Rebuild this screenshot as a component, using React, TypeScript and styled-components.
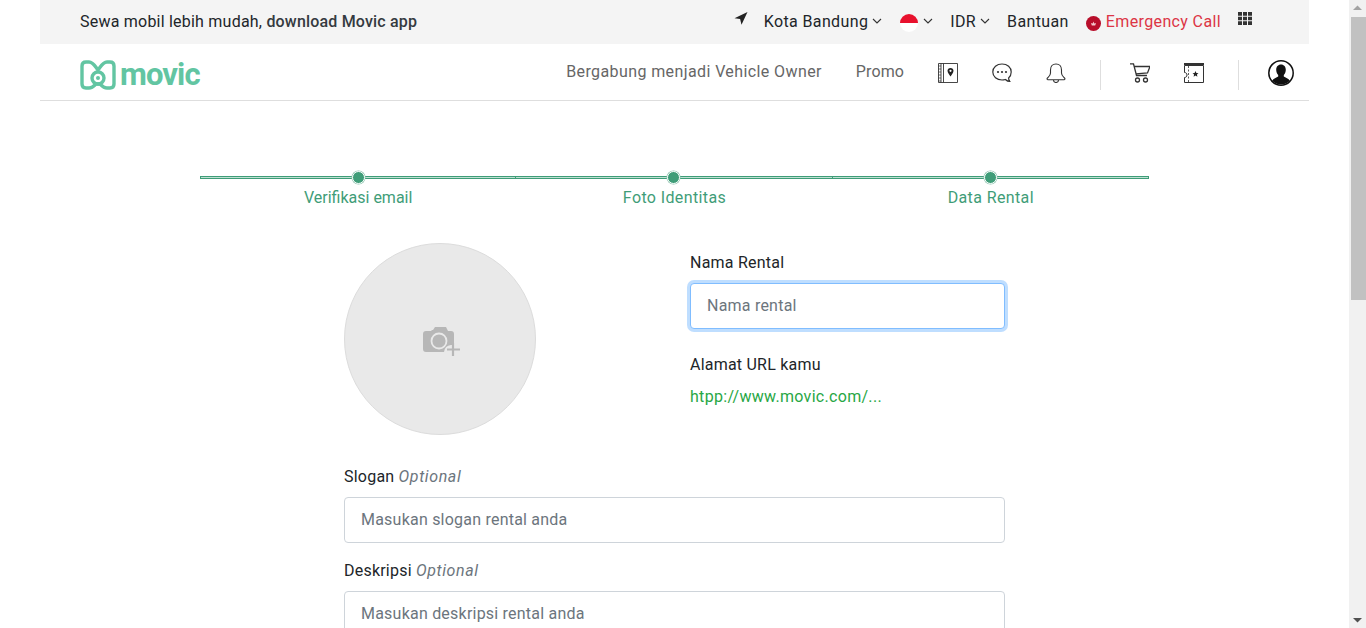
import styled, { createGlobalStyle } from 'styled-components';

const steps = [
  { label: 'Verifikasi email', spacing: 0 },
  { label: 'Foto Identitas', spacing: 0.38 },
  { label: 'Data Rental', spacing: 0.38 },
];

const GlobalStyle = createGlobalStyle`
  * {
    box-sizing: border-box;
  }
  html,
  body {
    height: 100%;
    overflow: hidden;
  }
  body {
    margin: 0;
    background: #fff;
    color: #212529;
    font-family: Roboto, "Liberation Sans", sans-serif;
    font-size: 16px;
    letter-spacing: 0.22px;
  }
`;

function Chevron() {
  return (
    <ChevronIcon viewBox="0 0 10 6" fill="none" stroke="#333" strokeWidth="1.1">
      <path d="M1 1l4 4 4-4" />
    </ChevronIcon>
  );
}

function Logo() {
  return (
    <LogoLink>
      <svg width="36" height="30" viewBox="0 0 36 30" fill="none" stroke="#62c5a2" strokeWidth="3.4">
        <path d="M6 2h3c4 0 6 4 9 8 3-4 5-8 9-8h3c2.500 0 4 1.500 4 4v18c0 2.500-1.500 4-4 4h-3c-3 0-5-2-7-4h-4c-2 2-4 4-7 4H6c-2.500 0-4-1.500-4-4V6c0-2.500 1.500-4 4-4z" />
        <circle cx="18" cy="18" r="6" />
        <circle cx="18" cy="18" r="2" fill="#62c5a2" stroke="none" />
      </svg>
      <LogoText>movic</LogoText>
    </LogoLink>
  );
}

function App() {
  return (
    <Frame>
      <GlobalStyle />
      <Viewport>
        <Page>
          <TopBar>
            <Tagline>
              Sewa mobil lebih mudah, <strong>download Movic app</strong>
            </Tagline>
            <TopMenu>
              <LocationItem>
                <svg width="14" height="13" viewBox="0 0 14 13" fill="#222">
                  <path d="M13.500 0L0.500 6.200l5.600 0.800 1.400 5.800z" />
                </svg>
              </LocationItem>
              <TopItem>
                Kota Bandung
                <Chevron />
              </TopItem>
              <TopItem>
                <Flag />
                <Chevron />
              </TopItem>
              <TopItem>
                IDR
                <Chevron />
              </TopItem>
              <TopItem>Bantuan</TopItem>
              <EmergencyItem>
                <svg width="15" height="15" viewBox="0 0 15 15">
                  <circle cx="7.500" cy="7.500" r="7.500" fill="#b80d2a" />
                  <path d="M7.500 5.500l0.800 2 1.700-0.400-0.800 2.500H5.800L5 7.100l1.700 0.400z" fill="#f3c6cc" />
                </svg>
                Emergency Call
              </EmergencyItem>
              <GridIcon viewBox="0 0 14 13" fill="#333">
                <path d="M0 0h4v3.700H0zM5 0h4v3.700H5zM10 0h4v3.700h-4zM0 4.700h4v3.600H0zM5 4.700h4v3.600H5zM10 4.700h4v3.600h-4zM0 9.300h4V13H0zM5 9.300h4V13H5zM10 9.300h4V13h-4z" />
              </GridIcon>
            </TopMenu>
          </TopBar>

          <NavBar>
            <Logo />
            <NavMenu>
              <NavLink>Bergabung menjadi Vehicle Owner</NavLink>
              <PromoLink>Promo</PromoLink>
              <svg width="20" height="20" viewBox="0 0 20 20" fill="none" stroke="#333">
                <path d="M0.500 0.500h19v19H0.500zM5.500 0.500v19M3 0.500v19" strokeWidth="0.900" />
                <path d="M0.500 3h2.500M0.500 6h2.500M0.500 9h2.500M0.500 12h2.500M0.500 15h2.500M0.500 18h2.500" strokeWidth="0.700" />
                <path d="M12.500 5c-1.800 0-3 1.300-3 2.800 0 1.900 2 4.200 3 5.700 1-1.500 3-3.800 3-5.700C15.500 6.300 14.300 5 12.500 5z" fill="#222" stroke="none" />
                <circle cx="12.500" cy="7.800" r="1.100" fill="#fff" stroke="none" />
              </svg>
              <svg width="20" height="20" viewBox="0 0 20 20" fill="none" stroke="#333" strokeWidth="1.200">
                <path d="M10 1C4.800 1 0.800 4.300 0.800 9s4 8 9.200 8c1.400 0 2.400-0.200 3.400-0.500 1 1 2.400 2 4.400 2-0.700-1-1.200-2.200-1.200-3.500 1.800-1.500 2.600-3.500 2.600-6 0-4.700-3.800-8-9.200-8z" />
                <circle cx="6" cy="9" r="1.100" fill="#333" stroke="none" />
                <circle cx="10" cy="9" r="1.100" fill="#333" stroke="none" />
                <circle cx="14" cy="9" r="1.100" fill="#333" stroke="none" />
              </svg>
              <svg width="20" height="20" viewBox="0 0 20 20" fill="none" stroke="#333" strokeWidth="1.100">
                <path d="M10 1C6.500 1 4.500 3.500 4.500 7v3c0 2.500-1.500 3.500-3 5-0.800 0.800-0.500 1.800 0.500 1.800h16c1 0 1.300-1 0.500-1.800-1.500-1.500-3-2.500-3-5V7c0-3.500-2-6-5.500-6z" />
                <path d="M7.500 17c0 1.500 1 2.500 2.500 2.500s2.500-1 2.500-2.500" />
              </svg>
              <DividedGroup>
                <svg width="20" height="20" viewBox="0 0 20 20" fill="none" stroke="#333" strokeWidth="1.300">
                  <path d="M0 0.800h3.500l3 11.700h10.500M4.300 3.500H20l-2.500 6.500-11.500 0.800" />
                  <circle cx="7.500" cy="17" r="2" />
                  <circle cx="15.500" cy="17" r="2" />
                </svg>
                <svg width="20" height="20" viewBox="0 0 20 20" fill="none" stroke="#333">
                  <path d="M0.500 2.500h19v17H0.500v-5c1.500 0 2.500-1 2.500-2.500s-1-2.500-2.500-2.500z" />
                  <path d="M0 1h20" strokeWidth="2" />
                  <path d="M4.500 3v16" strokeDasharray="2 1.500" strokeWidth="0.800" />
                  <path d="M11.500 8l0.900 2 2.100 0.200-1.600 1.400 0.500 2.100-1.900-1.100-1.900 1.100 0.500-2.100-1.600-1.400 2.100-0.200z" fill="#222" stroke="none" />
                </svg>
              </DividedGroup>
              <UserButton>
                <svg width="26" height="26" viewBox="0 0 26 26">
                  <circle cx="13" cy="13" r="12.200" fill="#fff" stroke="#111" strokeWidth="1.500" />
                  <path d="M13 4.500c-3 0-4.800 2.300-4.800 5.300 0 2 0.800 4 2 5.200v1.500c-1.500 1.200-5 1.800-6 4.200C6.500 23 9.500 24.500 13 24.500s6.500-1.500 8.800-3.800c-1-2.400-4.500-3-6-4.200V15c1.200-1.200 2-3.200 2-5.200 0-3-1.800-5.300-4.800-5.300z" fill="#111" />
                </svg>
              </UserButton>
            </NavMenu>
          </NavBar>

          <Main>
            <Stepper>
              {steps.map((step) => (
                <Step key={step.label}>
                  <StepTrack>
                    <StepDot />
                  </StepTrack>
                  <StepLabel $spacing={step.spacing}>{step.label}</StepLabel>
                </Step>
              ))}
            </Stepper>

            <Form>
              <TopRow>
                <AvatarPicker>
                  <svg width="38" height="30" viewBox="0 0 38 30">
                    <path d="M3 4h5l1-1h1l2-3h11l2 4h3c2 0 3 1 3 3v11h-3a8 8 0 0 0-7 7H3c-2 0-3-1-3-3V7c0-2 1-3 3-3z" fill="#b7b7b7" />
                    <circle cx="16" cy="14" r="7.500" fill="#b7b7b7" stroke="#e9e9e9" strokeWidth="1.800" />
                    <path d="M30 16v13M24 22.500h13" stroke="#b7b7b7" strokeWidth="2.200" />
                  </svg>
                </AvatarPicker>
                <RentalColumn>
                  <Label>Nama Rental</Label>
                  <FocusedInput placeholder="Nama rental" />
                  <UrlLabel>Alamat URL kamu</UrlLabel>
                  <UrlValue>htpp://www.movic.com/...</UrlValue>
                </RentalColumn>
              </TopRow>
              <Field>
                <Label>
                  Slogan <Optional>Optional</Optional>
                </Label>
                <TextInput placeholder="Masukan slogan rental anda" />
              </Field>
              <Field>
                <Label>
                  Deskripsi <Optional>Optional</Optional>
                </Label>
                <TextInput placeholder="Masukan deskripsi rental anda" />
              </Field>
            </Form>
          </Main>
        </Page>
      </Viewport>
      <Scrollbar>
        <ScrollArrow viewBox="0 0 17 17" fill="#a3a3a3">
          <path d="M8.500 5.500L13 10H4z" />
        </ScrollArrow>
        <ScrollTrack>
          <ScrollThumb />
        </ScrollTrack>
        <ScrollArrow viewBox="0 0 17 17" fill="#505050">
          <path d="M4 7h9l-4.500 4.500z" />
        </ScrollArrow>
      </Scrollbar>
    </Frame>
  );
}

const Frame = styled.div`
  display: flex;
  height: 100vh;
  overflow: hidden;
`;

const Viewport = styled.div`
  flex: 1;
  min-width: 0;
  overflow: hidden;
`;

const Scrollbar = styled.aside`
  display: flex;
  flex-direction: column;
  flex: none;
  width: 17px;
  background: #f1f1f1;
`;

const ScrollArrow = styled.svg`
  flex: none;
  width: 17px;
  height: 17px;
`;

const ScrollTrack = styled.div`
  flex: 1;
`;

const ScrollThumb = styled.div`
  height: 283px;
  margin-left: 2px;
  background: #c1c1c1;
`;

const Page = styled.div`
  margin: 0 40px;
`;

const TopBar = styled.header`
  display: flex;
  align-items: center;
  justify-content: space-between;
  height: 44px;
  padding: 0 57px 2px 40px;
  background: #f4f4f4;
`;

const Tagline = styled.div`
  strong {
    font-weight: 500;
    color: #343a40;
    letter-spacing: 0.18px;
  }
`;

const TopMenu = styled.div`
  display: flex;
  align-items: center;
  gap: 17px;
  letter-spacing: 0.37px;
`;

const TopItem = styled.div`
  display: flex;
  align-items: center;
  gap: 4px;
`;

const LocationItem = styled.div`
  display: flex;
  margin-right: -1px;
  margin-top: -5px;
`;

const EmergencyItem = styled(TopItem)`
  gap: 5px;
  color: #dc3545;

  svg {
    margin-top: 5px;
  }
`;

const ChevronIcon = styled.svg`
  width: 10px;
  height: 6px;
`;

const Flag = styled.span`
  width: 18px;
  height: 18px;
  margin: 4px 1px 0 1px;
  border-radius: 50%;
  background: linear-gradient(#e8112d 50%, #fff 50%);
`;

const GridIcon = styled.svg`
  width: 14px;
  height: 13px;
  margin-top: -6px;
`;

const NavBar = styled.nav`
  display: flex;
  align-items: center;
  justify-content: space-between;
  height: 57px;
  padding: 2px 15px 0 40px;
  border-bottom: 1px solid #dedede;
`;

const LogoLink = styled.a`
  display: flex;
  align-items: center;
  gap: 4px;
  margin-top: 4px;
`;

const LogoText = styled.span`
  color: #62c5a2;
  font-family: Roboto, sans-serif;
  font-size: 31px;
  font-weight: 700;
  line-height: 30px;
  letter-spacing: -0.9px;
`;

const NavMenu = styled.div`
  display: flex;
  align-items: center;
  gap: 34px;
  letter-spacing: 0.4px;
`;

const NavLink = styled.a`
  color: #666;
  margin-top: -4px;
`;

const PromoLink = styled(NavLink)`
  letter-spacing: 0.1px;
`;

const DividedGroup = styled.div`
  display: flex;
  align-items: flex-start;
  gap: 34px;
  height: 30px;
  margin: 4px -5px 0 0;
  padding: 3px 34px 0 29px;
  border-left: 1px solid #dedede;
  border-right: 1px solid #dedede;
`;

const UserButton = styled.div`
  display: flex;
`;

const Main = styled.main`
  padding-top: 71px;
`;

const Stepper = styled.ol`
  display: flex;
  width: 949px;
  margin: 0 auto;
  padding: 0;
  list-style: none;
`;

const Step = styled.li`
  flex: 1;
  text-align: center;
`;

const StepTrack = styled.div`
  position: relative;
  display: flex;
  justify-content: center;
  align-items: center;
  height: 3px;
  margin-top: 4px;
  background: #bfe0d3;
  border: 1px solid #3f9d78;
  border-left-width: 0;

  ${Step}:first-child & {
    border-left-width: 1px;
  }
`;

const StepDot = styled.span`
  position: absolute;
  width: 13px;
  height: 13px;
  margin-top: -1px;
  border: 1.500px solid #fff;
  border-radius: 50%;
  background: #3f9d78;
  box-shadow: 0 0 0 0.500px #8fc5b0;
`;

const StepLabel = styled.div<{ $spacing: number }>`
  margin-top: 9px;
  color: #3f9d78;
  letter-spacing: ${(p) => p.$spacing}px;
`;

const Form = styled.form`
  width: 661px;
  margin: 36px auto 0;
`;

const TopRow = styled.div`
  display: flex;
  gap: 154px;
`;

const AvatarPicker = styled.div`
  display: flex;
  align-items: center;
  justify-content: center;
  flex: none;
  width: 192px;
  height: 192px;
  border: 1px solid #dcdcdc;
  border-radius: 50%;
  background: #e9e9e9;

  svg {
    margin: 6px 0 0 4px;
  }
`;

const RentalColumn = styled.div`
  flex: 1;
  padding-top: 10px;
`;

const Label = styled.label`
  display: block;
  margin-bottom: 10px;
  line-height: 20px;
`;

const Optional = styled.em`
  color: #6c757d;
  letter-spacing: 0.6px;
`;

const TextInput = styled.input`
  display: block;
  width: 100%;
  height: 46px;
  padding: 0 16px 2px;
  border: 1px solid #ced4da;
  border-radius: 4px;
  outline: none;
  background: #fff;
  color: #495057;
  font: inherit;
  letter-spacing: inherit;

  &::placeholder {
    color: #6c757d;
    opacity: 1;
  }
`;

const FocusedInput = styled(TextInput)`
  border-color: #80bdff;
  box-shadow: 0 0 0 3px rgba(0, 123, 255, 0.25);
`;

const UrlLabel = styled(Label)`
  margin-top: 26px;
`;

const UrlValue = styled.div`
  margin-top: 12px;
  color: #28a745;
  letter-spacing: 0.3px;
`;

const Field = styled.div`
  margin-top: 32px;

  & + & {
    margin-top: 18px;
  }
`;

export default App;
